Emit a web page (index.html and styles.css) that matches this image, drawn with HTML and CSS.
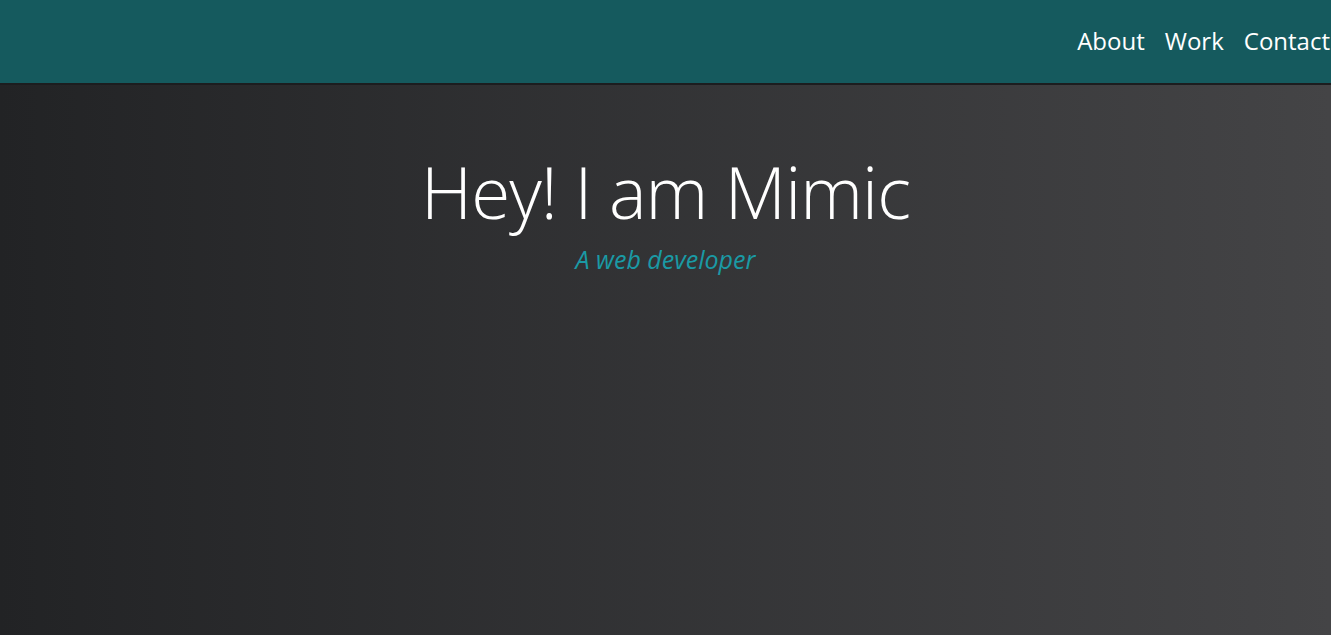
FILE: index.html
```html
<!DOCTYPE html>
<html lang="en">
<head>
<meta charset="utf-8">
<title>Mimic</title>
<link rel="stylesheet" href="styles.css">
</head>
<body>
<header class="topbar">
  <nav class="nav">
    <a class="nav-link" href="#about">About</a>
    <a class="nav-link" href="#work">Work</a>
    <a class="nav-link" href="#contact">Contact</a>
  </nav>
</header>
<main class="hero">
  <h1 class="hero-title">Hey! I am Mimic</h1>
  <p class="hero-sub">A web developer</p>
</main>
</body>
</html>
```

FILE: styles.css
```css
html, body {
  margin: 0;
  padding: 0;
  height: 100%;
}
body {
  font-family: "Open Sans", "Noto Sans", sans-serif;
  background: linear-gradient(to right, #222325, #444446);
  min-height: 635px;
  display: flex;
  flex-direction: column;
}
.topbar {
  background: #155a5e;
  border-bottom: 2px solid #1c1d1f;
  display: flex;
  justify-content: flex-end;
  align-items: center;
  box-sizing: border-box;
  height: 85px;
}
.nav {
  display: flex;
  gap: 20px;
  margin-right: 1px;
  padding-bottom: 3px;
}
.nav-link {
  color: #ffffff;
  text-decoration: none;
  font-size: 24px;
  font-weight: 400;
}
.hero {
  flex: 1;
  text-align: center;
  padding-top: 62px;
}
.hero-title {
  margin: 0;
  font-size: 71px;
  font-weight: 300;
  line-height: 90px;
  color: #ffffff;
  letter-spacing: -0.95px;
}
.hero-sub {
  margin: 6px 0 0;
  font-size: 25px;
  font-style: italic;
  color: #1a9aa5;
  line-height: 32px;
}
```
